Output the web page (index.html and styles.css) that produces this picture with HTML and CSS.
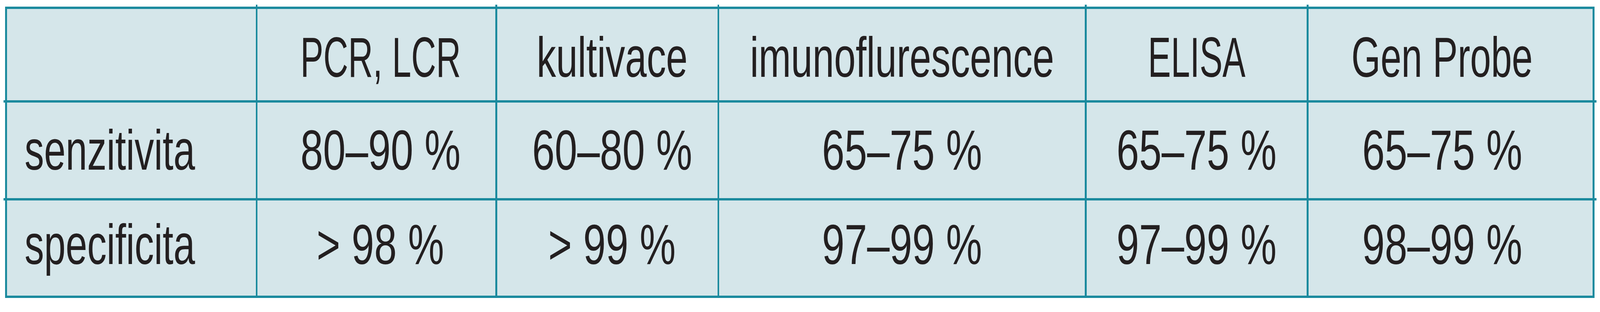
FILE: index.html
```html
<!DOCTYPE html>
<html lang="cs">
<head>
<meta charset="utf-8">
<title>Tabulka</title>
<link rel="stylesheet" href="styles.css">
</head>
<body>
<div class="page">
  <div class="table">
    <div class="cell r1 first"></div>
    <div class="cell r1 c2"><span class="t caps">PCR, LCR</span></div>
    <div class="cell r1 c3"><span class="t">kultivace</span></div>
    <div class="cell r1 c4"><span class="t">imunoflurescence</span></div>
    <div class="cell r1 c5"><span class="t caps">ELISA</span></div>
    <div class="cell r1 c6 last"><span class="t mixed">Gen Probe</span></div>

    <div class="cell r2 first"><span class="t">senzitivita</span></div>
    <div class="cell r2 c2"><span class="t num">80–90 %</span></div>
    <div class="cell r2 c3"><span class="t num">60–80 %</span></div>
    <div class="cell r2 c4"><span class="t num">65–75 %</span></div>
    <div class="cell r2 c5"><span class="t num">65–75 %</span></div>
    <div class="cell r2 c6 last"><span class="t num">65–75 %</span></div>

    <div class="cell r3 first"><span class="t">specificita</span></div>
    <div class="cell r3 c2"><span class="t num">&gt; 98 %</span></div>
    <div class="cell r3 c3"><span class="t num">&gt; 99 %</span></div>
    <div class="cell r3 c4"><span class="t num">97–99 %</span></div>
    <div class="cell r3 c5"><span class="t num">97–99 %</span></div>
    <div class="cell r3 c6 last"><span class="t num">98–99 %</span></div>
  </div>
</div>
</body>
</html>
```

FILE: styles.css
```css
:root {
  /* one reference pixel across; the height of the frame is fixed at 800px */
  --u: calc(100vw / 5261);
  --line: #1b8a9e;
  --fill: #d5e6ea;
}

html, body {
  margin: 0;
  padding: 0;
  background: #ffffff;
}

body {
  font-family: "Liberation Sans", Arial, sans-serif;
  color: #231f20;
}

.page {
  padding: 17px calc(18 * var(--u)) 0 calc(17 * var(--u));
}

.table {
  display: grid;
  grid-template-columns: 818fr 782fr 724fr 1202fr 724fr 934fr;
  grid-template-rows: 234px 245px 244px;
  row-gap: 6px;
  column-gap: calc(6 * var(--u));
  padding: 6px calc(6 * var(--u));
  background: var(--line);
}

.cell {
  position: relative;
  min-width: 0;
  box-sizing: border-box;
  background: var(--fill);
  display: flex;
  justify-content: center;
  align-items: center;
  font-size: calc(145 * var(--u));
  line-height: normal;
  white-space: nowrap;
}

.cell.r1 { padding-top: 14px; }
.cell.r3 { padding-bottom: 18px; }

.cell.first {
  justify-content: flex-start;
  padding-left: calc(58 * var(--u));
}

.cell.c2 { padding-left: calc(26 * var(--u)); }
.cell.c3 { padding-left: calc(32 * var(--u)); }
.cell.c6 { padding-right: calc(56 * var(--u)); }

.t {
  display: inline-block;
  transform: scaleX(0.88);
  transform-origin: center center;
}

.first .t {
  transform-origin: left center;
}

.t.num { transform: scaleX(0.92); }
.t.caps { transform: scaleX(0.78); }
.t.mixed { transform: scaleX(0.85); }

/* When the window is not 5261px wide, keep the glyph height fixed and squeeze the width. */
@supports (transform: scaleX(calc(100vw / 5261px))) {
  .cell { font-size: 145px; }
  .t { transform: scaleX(calc(0.88 * 100vw / 5261px)); }
  .t.num { transform: scaleX(calc(0.92 * 100vw / 5261px)); }
  .t.caps { transform: scaleX(calc(0.78 * 100vw / 5261px)); }
  .t.mixed { transform: scaleX(calc(0.85 * 100vw / 5261px)); }
}

/* grid-line nubs that poke out past the outer frame */
.cell.r1:not(.first)::before,
.cell.r3:not(.first)::after {
  content: "";
  position: absolute;
  left: calc(-6 * var(--u));
  width: calc(6 * var(--u));
  background: var(--line);
}

.cell.r1:not(.first)::before {
  top: -11px;
  height: 5px;
}

.cell.r3:not(.first)::after {
  bottom: -12px;
  height: 6px;
}

.cell.first.r2::before,
.cell.first.r3::before {
  content: "";
  position: absolute;
  left: calc(-11 * var(--u));
  top: -6px;
  width: calc(5 * var(--u));
  height: 6px;
  background: var(--line);
}

.cell.last.r2::before,
.cell.last.r3::before {
  content: "";
  position: absolute;
  right: calc(-12 * var(--u));
  top: -6px;
  width: calc(6 * var(--u));
  height: 6px;
  background: var(--line);
}
```
